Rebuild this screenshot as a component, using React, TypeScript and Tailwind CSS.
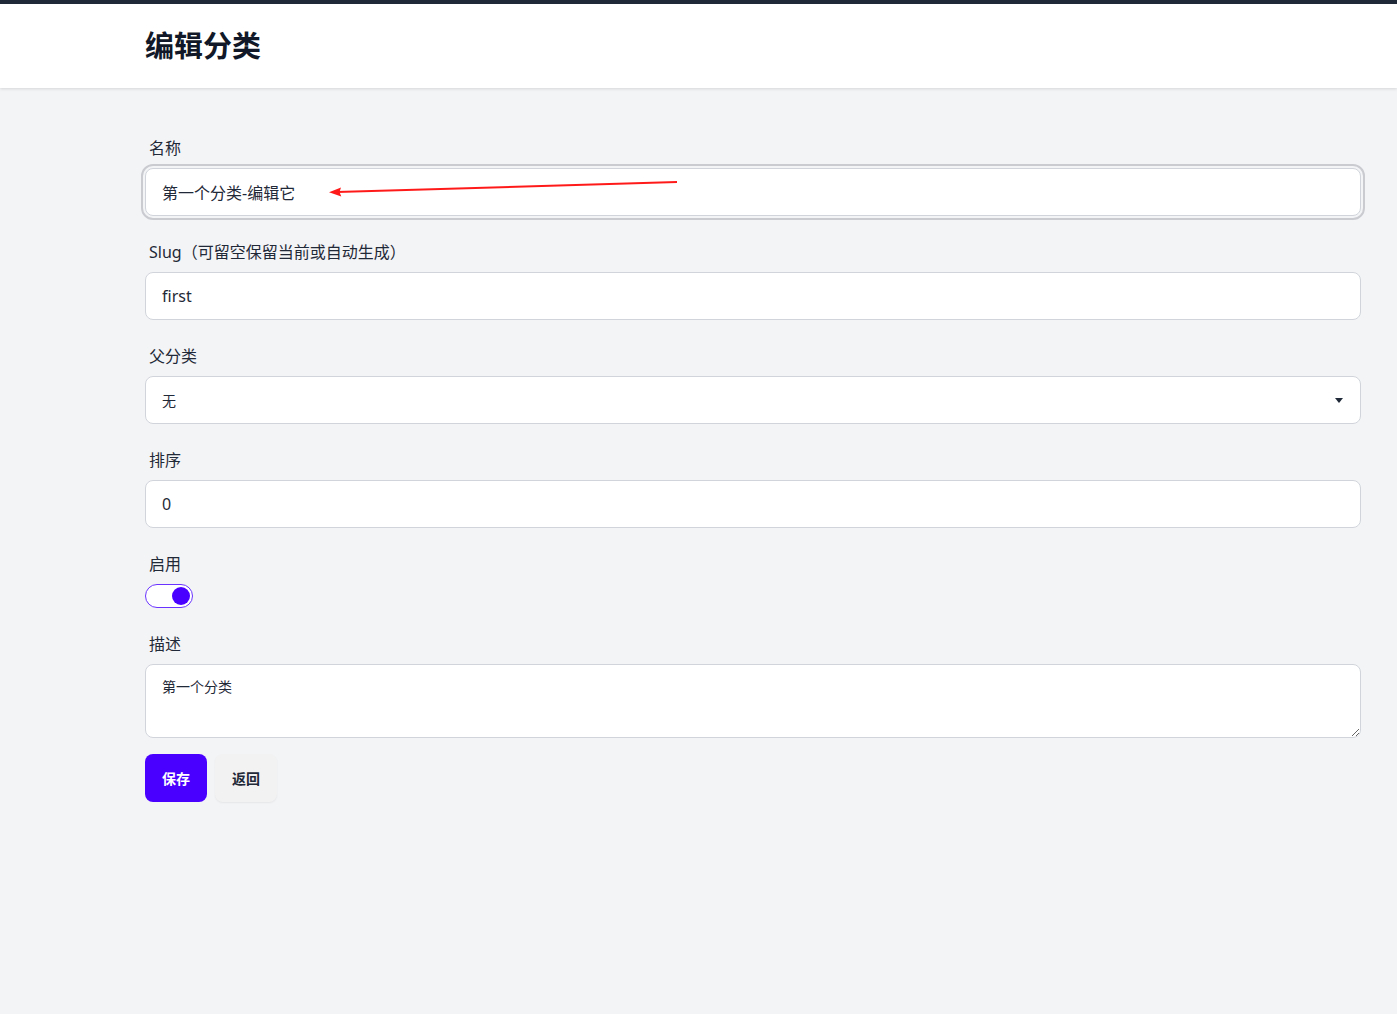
import React, { useState } from 'react';

const font = { fontFamily: '"Noto Sans", "Noto Sans CJK SC", sans-serif' };

const Label = ({ children }: { children: React.ReactNode }) => (
  <label className="block px-1 py-2 text-[16px] leading-6 text-[#1f2937]">{children}</label>
);

export default function App() {
  const [name, setName] = useState('第一个分类-编辑它');
  const [slug, setSlug] = useState('first');
  const [order, setOrder] = useState('0');
  const [enabled, setEnabled] = useState(true);
  const [desc, setDesc] = useState('第一个分类');

  return (
    <div className="min-h-screen bg-[#f3f4f6] text-[#1f2937]" style={font}>
      {/* Header */}
      <header className="bg-white border-t-4 border-[#1f2937] shadow-[0_1px_3px_rgba(0,0,0,0.12)]">
        <div className="pl-[145px] pr-[36px] py-6">
          <h1 className="text-[29px] leading-9 font-bold text-[#111827]">编辑分类</h1>
        </div>
      </header>

      {/* Form */}
      <main className="pl-[145px] pr-[36px] pt-10 pb-10">
        <form className="flex flex-col gap-4" onSubmit={(e) => e.preventDefault()}>
          <div>
            <Label>名称</Label>
            <div className="relative">
              <input
                value={name}
                onChange={(e) => setName(e.target.value)}
                className="w-full h-12 px-4 rounded-lg bg-white border border-[#d1d5db] text-[16px] text-[#1f2937] outline-2 outline-offset-2 outline-[#c9cbd1]"
              />
              {/* annotation arrow */}
              <svg className="absolute left-0 top-0 pointer-events-none" width="700" height="48" viewBox="0 0 700 48">
                <line x1="532" y1="14" x2="192" y2="24" stroke="#ff1a1a" strokeWidth="2" />
                <path d="M184 24.3 L196 19.5 L194.5 24 L196.3 28.4 Z" fill="#ff1a1a" />
              </svg>
            </div>
          </div>

          <div>
            <Label>Slug（可留空保留当前或自动生成）</Label>
            <input
              value={slug}
              onChange={(e) => setSlug(e.target.value)}
              className="w-full h-12 px-4 rounded-lg bg-white border border-[#d1d5db] text-[16px] text-[#1f2937] focus:outline-none"
            />
          </div>

          <div>
            <Label>父分类</Label>
            <div className="relative">
              <select className="w-full h-12 px-4 rounded-lg bg-white border border-[#d1d5db] text-[14px] text-[#1f2937] appearance-none focus:outline-none">
                <option>无</option>
              </select>
              <svg className="absolute right-[18px] top-[22px] pointer-events-none" width="8" height="5" viewBox="0 0 8 5">
                <path d="M0 0 L8 0 L4 5 Z" fill="#1f2937" />
              </svg>
            </div>
          </div>

          <div>
            <Label>排序</Label>
            <input
              value={order}
              onChange={(e) => setOrder(e.target.value)}
              className="w-full h-12 px-4 rounded-lg bg-white border border-[#d1d5db] text-[16px] text-[#1f2937] focus:outline-none"
            />
          </div>

          <div>
            <Label>启用</Label>
            <button
              type="button"
              onClick={() => setEnabled(!enabled)}
              className={`flex items-center w-12 h-6 rounded-full bg-white border-[1.5px] border-[#6a33ff] px-[2px] ${enabled ? 'justify-end' : 'justify-start'}`}
            >
              <span className="block w-[18px] h-[18px] rounded-full bg-[#4a00ff]" />
            </button>
          </div>

          <div>
            <Label>描述</Label>
            <textarea
              value={desc}
              onChange={(e) => setDesc(e.target.value)}
              className="block w-full h-[74px] px-4 py-3 rounded-lg bg-white border border-[#d1d5db] text-[14px] leading-5 text-[#1f2937] focus:outline-none"
            />
          </div>

          <div className="flex gap-2">
            <button type="submit" className="h-12 px-[17px] rounded-lg bg-[#4a00ff] text-white text-[14px] font-bold">
              保存
            </button>
            <button type="button" className="h-12 px-[17px] rounded-lg bg-[#f2f2f2] text-[#1f2937] text-[14px] font-bold shadow-[0_1px_2px_rgba(0,0,0,0.06)]">
              返回
            </button>
          </div>
        </form>
      </main>
    </div>
  );
}
